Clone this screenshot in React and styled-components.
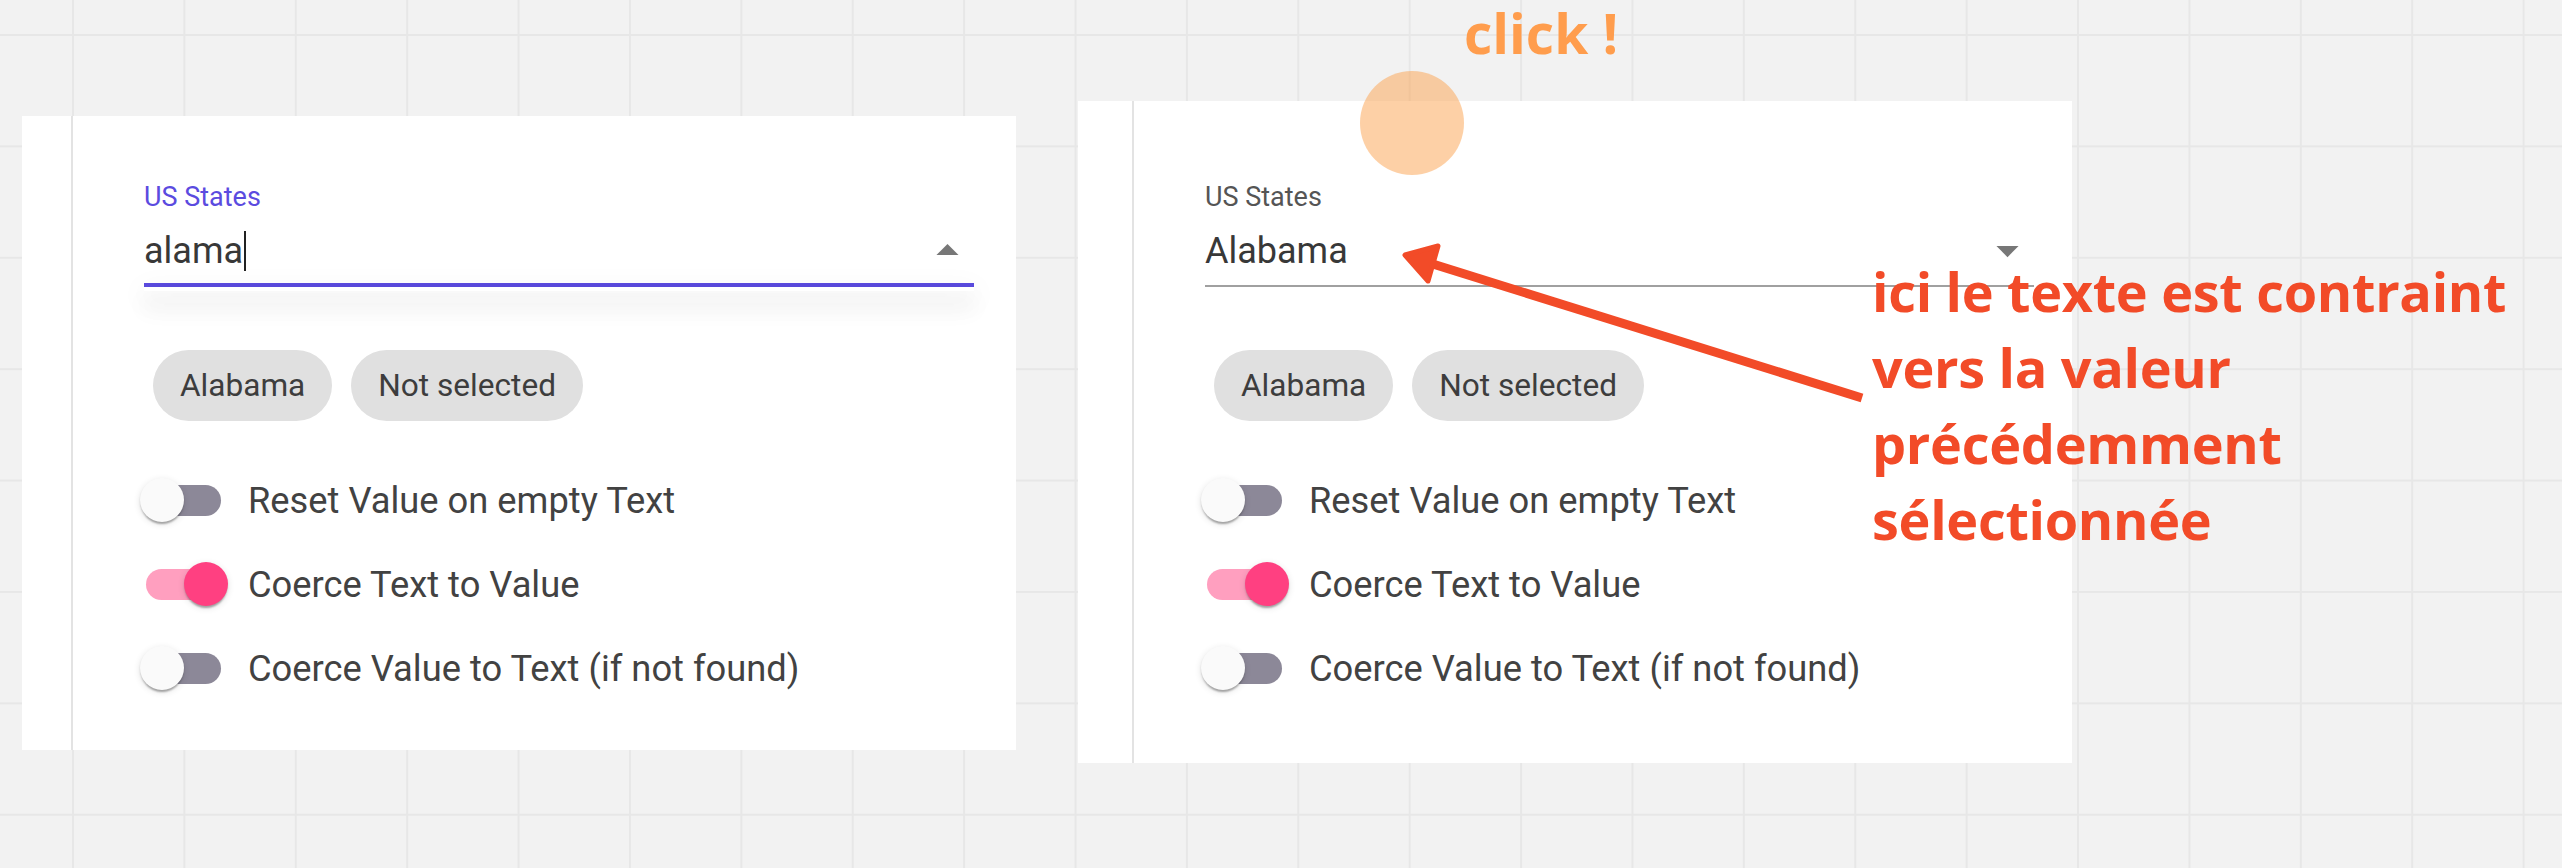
import React from 'react';
import styled, { createGlobalStyle } from 'styled-components';

const GlobalStyle = createGlobalStyle`
  html, body {
    margin: 0;
    padding: 0;
  }
  body {
    font-family: Roboto, "Liberation Sans", sans-serif;
  }
`;

const TOGGLES = [
  { label: 'Reset Value on empty Text', checked: false },
  { label: 'Coerce Text to Value', checked: true },
  { label: 'Coerce Value to Text (if not found)', checked: false }
];

const CHIPS = ['Alabama', 'Not selected'];

const StateField = ({ focused, value }) => (
  <Field>
    <FieldLabel $focused={focused}>US States</FieldLabel>
    <InputRow $focused={focused}>
      <InputText>
        {value}
        {focused && <Caret />}
      </InputText>
      <PopupIcon $open={focused} viewBox="0 0 24 24">
        <path d="M7 10l5 5 5-5z" />
      </PopupIcon>
    </InputRow>
    {focused && <Popup />}
  </Field>
);

const Toggle = ({ label, checked }) => (
  <ToggleRow>
    <SwitchBox>
      <Track $checked={checked}>
        <Knob $checked={checked} />
      </Track>
    </SwitchBox>
    <ToggleLabel>{label}</ToggleLabel>
  </ToggleRow>
);

const DemoCard = ({ focused, value, offset, gutter, padTop, padBottom, padRight }) => (
  <Card $offset={offset}>
    <Gutter $width={gutter} />
    <Body $padTop={padTop} $padBottom={padBottom} $padRight={padRight}>
      <StateField focused={focused} value={value} />
      <ChipRow>
        {CHIPS.map(c => <Chip key={c}>{c}</Chip>)}
      </ChipRow>
      <ToggleList>
        {TOGGLES.map(t => <Toggle key={t.label} {...t} />)}
      </ToggleList>
    </Body>
  </Card>
);

const App = () => (
  <>
    <GlobalStyle />
    <Canvas>
      <DemoCard focused value="alama" offset={15} gutter={49} padTop={66} padBottom={40} padRight={42} />
      <DemoCard value="Alabama" offset={0} gutter={54} padTop={81} padBottom={53} padRight={38} />

      <ClickText>click !</ClickText>
      <TapMark />
      <Arrow width="500" height="200" viewBox="0 0 500 200">
        <line x1="40" y1="40" x2="482" y2="178" stroke="#f24b28" strokeWidth="9" />
        <polygon points="25,35 58,26 48,61" fill="#f24b28" stroke="#f24b28" strokeWidth="5" strokeLinejoin="round" />
      </Arrow>
      <Note>
        ici le texte est contraint<br />
        vers la valeur<br />
        précédemment<br />
        sélectionnée
      </Note>
    </Canvas>
  </>
);

// Styled Components

const Canvas = styled.div`
  position: relative;
  box-sizing: border-box;
  width: 2562px;
  height: 868px;
  overflow: hidden;
  display: flex;
  align-items: flex-start;
  gap: 62px;
  padding: 101px 0 0 22px;
  background-color: #f2f2f2;
  background-image:
    linear-gradient(to right, #e7e7e7 2px, transparent 2px),
    linear-gradient(to bottom, #e7e7e7 2px, transparent 2px);
  background-size: 111.4px 111.4px;
  background-position: 72px 34px;
`;

const Card = styled.section`
  display: flex;
  width: 994px;
  flex-shrink: 0;
  margin-top: ${({ $offset }) => $offset}px;
  background: #fff;
`;

const Gutter = styled.div`
  width: ${({ $width }) => $width}px;
  flex-shrink: 0;
  border-right: 2px solid #e3e3e3;
`;

const Body = styled.div`
  flex: 1;
  min-width: 0;
  display: flex;
  flex-direction: column;
  padding: ${({ $padTop }) => $padTop}px ${({ $padRight }) => $padRight}px
    ${({ $padBottom }) => $padBottom}px 71px;
`;

const Field = styled.div`
  position: relative;
  display: flex;
  flex-direction: column;
`;

const FieldLabel = styled.label`
  font-size: 27px;
  line-height: 30px;
  margin-bottom: 17px;
  color: ${({ $focused }) => ($focused ? '#5b4bdf' : '#555')};
`;

const InputRow = styled.div`
  display: flex;
  align-items: center;
  height: 44px;
  padding-bottom: ${({ $focused }) => ($focused ? 10 : 12)}px;
  border-bottom: ${({ $focused }) => ($focused ? '4px solid #5b4bdf' : '2px solid #a0a0a0')};
`;

const InputText = styled.div`
  flex: 1;
  display: flex;
  align-items: center;
  font-size: 36px;
  line-height: 44px;
  color: #383838;
`;

const Caret = styled.span`
  display: inline-block;
  width: 2px;
  height: 40px;
  margin-left: 1px;
  background: #222;
`;

const PopupIcon = styled.svg`
  width: 53px;
  height: 53px;
  margin: -5px 0 -4px;
  fill: #777;
  transform: rotate(${({ $open }) => ($open ? 180 : 0)}deg);
`;

const Popup = styled.div`
  position: absolute;
  top: 100%;
  left: 0;
  right: 0;
  height: 4px;
  background: #fff;
  box-shadow: 0 10px 10px -6px rgba(0, 0, 0, 0.12),
    0 16px 22px 2px rgba(0, 0, 0, 0.07), 0 6px 28px 4px rgba(0, 0, 0, 0.06);
`;

const ChipRow = styled.div`
  display: flex;
  gap: 19px;
  margin-top: 63px;
  padding-left: 9px;
`;

const Chip = styled.div`
  display: flex;
  align-items: center;
  height: 71px;
  padding: 0 27px;
  border-radius: 36px;
  background: #e0e0e0;
  font-size: 31.6px;
  color: #3d3d3d;
`;

const ToggleList = styled.div`
  display: flex;
  flex-direction: column;
  margin-top: 37px;
`;

const ToggleRow = styled.div`
  display: flex;
  align-items: center;
  height: 84px;
  margin-left: -24px;
`;

const SwitchBox = styled.div`
  box-sizing: border-box;
  display: flex;
  align-items: center;
  width: 128px;
  height: 84px;
  padding-left: 26px;
  flex-shrink: 0;
`;

const Track = styled.div`
  position: relative;
  width: 75px;
  height: 31px;
  border-radius: 16px;
  background: ${({ $checked }) => ($checked ? '#ff9fbf' : '#8c8898')};
`;

const Knob = styled.div`
  position: absolute;
  top: -6.5px;
  left: ${({ $checked }) => ($checked ? 37.5 : -6.5)}px;
  width: 44px;
  height: 44px;
  border-radius: 50%;
  background: ${({ $checked }) => ($checked ? '#ff4081' : '#fafafa')};
  box-shadow: 0 4px 2px -2px rgba(0, 0, 0, 0.2), 0 2px 2px 0 rgba(0, 0, 0, 0.14),
    0 2px 7px 0 rgba(0, 0, 0, 0.12);
`;

const ToggleLabel = styled.span`
  font-size: 36.3px;
  color: #424242;
  white-space: nowrap;
`;

const ClickText = styled.div`
  position: absolute;
  left: 1464px;
  top: 5px;
  font-family: "Open Sans", "Liberation Sans", sans-serif;
  font-weight: 700;
  font-size: 55px;
  line-height: 56px;
  color: #ff9d4d;
`;

const TapMark = styled.div`
  position: absolute;
  left: 1360px;
  top: 71px;
  width: 104px;
  height: 104px;
  border-radius: 50%;
  background: rgba(251, 161, 77, 0.5);
`;

const Arrow = styled.svg`
  position: absolute;
  left: 1380px;
  top: 220px;
  overflow: visible;
`;

const Note = styled.div`
  position: absolute;
  left: 1872px;
  top: 253px;
  font-family: "Open Sans", "Liberation Sans", sans-serif;
  font-weight: 700;
  font-size: 54px;
  line-height: 76px;
  letter-spacing: -0.3px;
  color: #f24b28;
  white-space: nowrap;
`;

export default App;
